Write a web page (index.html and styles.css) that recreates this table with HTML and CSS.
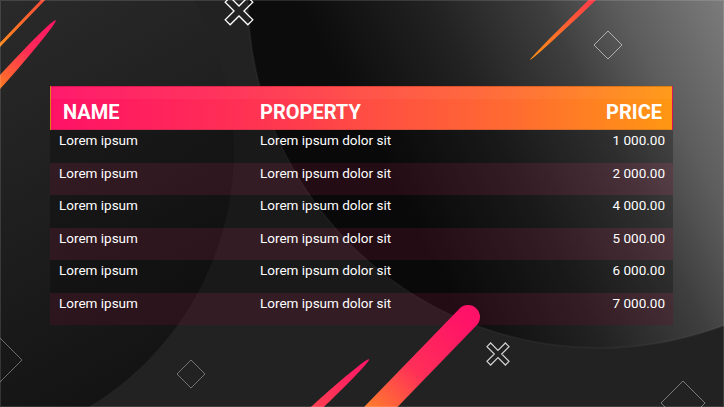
FILE: index.html
```html
<!DOCTYPE html>
<html lang="en">
<head>
<meta charset="utf-8">
<title>Price table</title>
<link rel="stylesheet" href="styles.css">
</head>
<body>
<div class="slide">
  <svg class="bg" viewBox="0 0 724 407" width="724" height="407" aria-hidden="true">
    <defs>
      <linearGradient id="gBig" gradientUnits="userSpaceOnUse" x1="300" y1="0" x2="636" y2="-168">
        <stop offset="0" stop-color="#0c0c0c"/>
        <stop offset="0.31" stop-color="#222222"/>
        <stop offset="0.57" stop-color="#3e3e3e"/>
        <stop offset="0.75" stop-color="#5c5c5c"/>
        <stop offset="1" stop-color="#7a7a7a"/>
      </linearGradient>
      <linearGradient id="gLeft" gradientUnits="userSpaceOnUse" x1="0" y1="0" x2="200" y2="350">
        <stop offset="0" stop-color="#2a2a2a"/>
        <stop offset="1" stop-color="#131313"/>
      </linearGradient>
    </defs>
    <rect width="724" height="407" fill="#222222"/>
    <circle cx="-66" cy="150" r="300" fill="url(#gLeft)"/>
    <circle cx="600" cy="-4" r="352" fill="url(#gBig)" stroke="rgba(255,255,255,0.04)" stroke-width="2"/>
  </svg>

  <div class="table">
    <div class="thead">
      <span class="th">NAME</span>
      <span class="th">PROPERTY</span>
      <span class="th num">PRICE</span>
    </div>
    <div class="row odd"><span>Lorem ipsum</span><span>Lorem ipsum dolor sit</span><span class="num">1 000.00</span></div>
    <div class="row even"><span>Lorem ipsum</span><span>Lorem ipsum dolor sit</span><span class="num">2 000.00</span></div>
    <div class="row odd"><span>Lorem ipsum</span><span>Lorem ipsum dolor sit</span><span class="num">4 000.00</span></div>
    <div class="row even"><span>Lorem ipsum</span><span>Lorem ipsum dolor sit</span><span class="num">5 000.00</span></div>
    <div class="row odd"><span>Lorem ipsum</span><span>Lorem ipsum dolor sit</span><span class="num">6 000.00</span></div>
    <div class="row even"><span>Lorem ipsum</span><span>Lorem ipsum dolor sit</span><span class="num">7 000.00</span></div>
  </div>

  <svg class="deco" viewBox="0 0 724 407" width="724" height="407" aria-hidden="true">
    <defs>
      <linearGradient id="gThin" gradientUnits="userSpaceOnUse" x1="0" y1="45" x2="43" y2="0">
        <stop offset="0" stop-color="#ff8a1c"/>
        <stop offset="1" stop-color="#ff4a3a"/>
      </linearGradient>
      <linearGradient id="gTL" x1="0" y1="0" x2="1" y2="0">
        <stop offset="0.55" stop-color="#ff7a22"/>
        <stop offset="0.8" stop-color="#ff2a58"/>
        <stop offset="1" stop-color="#ff1466"/>
      </linearGradient>
      <linearGradient id="gTR" x1="0" y1="0" x2="1" y2="0">
        <stop offset="0" stop-color="#ff9414"/>
        <stop offset="0.39" stop-color="#ff3a48"/>
      </linearGradient>
      <linearGradient id="gBigStick" gradientUnits="userSpaceOnUse" x1="466" y1="318" x2="375" y2="412">
        <stop offset="0" stop-color="#ff1268"/>
        <stop offset="0.55" stop-color="#ff2e58"/>
        <stop offset="1" stop-color="#ff7a2e"/>
      </linearGradient>
      <linearGradient id="gSmall" x1="0" y1="0" x2="1" y2="0">
        <stop offset="0.5" stop-color="#ff4a4a"/>
        <stop offset="1" stop-color="#ff1468"/>
      </linearGradient>
    </defs>

    <line x1="-2" y1="47" x2="45" y2="-2" stroke="url(#gThin)" stroke-width="3" stroke-linecap="round"/>
    <ellipse cx="-10" cy="93" rx="98" ry="4.8" fill="url(#gTL)" transform="rotate(-47.9 -10 93)"/>
    <ellipse cx="610" cy="-17" rx="111" ry="2.6" fill="url(#gTR)" transform="rotate(-43.9 610 -17)"/>
    <line x1="468" y1="317" x2="342" y2="447" stroke="url(#gBigStick)" stroke-width="24" stroke-linecap="round"/>
    <ellipse cx="300" cy="423" rx="94" ry="4.5" fill="url(#gSmall)" transform="rotate(-42.7 300 423)"/>

    <polygon points="-3.5,-16 3.5,-16 3.5,-3.5 16,-3.5 16,3.5 3.5,3.5 3.5,16 -3.5,16 -3.5,3.5 -16,3.5 -16,-3.5 -3.5,-3.5"
      transform="translate(239 11) rotate(45)" fill="none" stroke="#ffffff" stroke-width="1.3" stroke-linejoin="miter"/>
    <polygon points="-2.6,-13 2.6,-13 2.6,-2.6 13,-2.6 13,2.6 2.6,2.6 2.6,13 -2.6,13 -2.6,2.6 -13,2.6 -13,-2.6 -2.6,-2.6"
      transform="translate(498 354) rotate(45)" fill="none" stroke="#d0d0d0" stroke-width="1.2"/>

    <polygon points="608,31 622,45 608,59 594,45" fill="none" stroke="rgba(255,255,255,0.55)" stroke-width="1"/>
    <polygon points="0,338 22,360 0,382 -22,360" fill="none" stroke="#6a6a6a" stroke-width="1"/>
    <polygon points="191,360 205,374 191,388 177,374" fill="none" stroke="#737373" stroke-width="1"/>
    <polygon points="683,381 705,403 683,425 661,403" fill="none" stroke="#7a7a7a" stroke-width="1"/>
  </svg>
</div>
</body>
</html>
```
FILE: styles.css
```css
* { box-sizing: border-box; }

html, body {
  margin: 0;
  padding: 0;
  background: #222222;
}

.slide {
  position: relative;
  width: 724px;
  height: 407px;
  overflow: hidden;
  padding: 86px 0 0 50px;
  font-family: Roboto, "Liberation Sans", Arial, sans-serif;
  color: #ffffff;
}

.slide::after {
  content: "";
  position: absolute;
  inset: 0;
  border: 1px solid rgba(255, 255, 255, 0.13);
  pointer-events: none;
  z-index: 3;
}

.bg, .deco {
  position: absolute;
  left: 0;
  top: 0;
  display: block;
  pointer-events: none;
}

.bg { z-index: 0; }
.deco { z-index: 2; }

.table {
  position: relative;
  z-index: 1;
  width: 623px;
}

.thead {
  display: grid;
  grid-template-columns: 197px 1fr auto;
  height: 44px;
  padding: 13px 10px 0 12px;
  border: 1px solid rgba(0, 0, 0, 0.14);
  background:
    linear-gradient(to bottom, rgba(255, 255, 255, 0.04) 0, rgba(255, 255, 255, 0.04) 12px, transparent 12px),
    linear-gradient(90deg, #ff1266 0%, #ff2a58 25%, #ff3c4c 40%, #ff4c44 50%, #ff6c30 75%, #ff9712 100%);
}

.th {
  font-size: 20px;
  font-weight: 700;
  line-height: 24px;
}

.row {
  display: grid;
  grid-template-columns: 201px 1fr auto;
  height: 32.5px;
  padding: 2px 8px 0 9px;
  font-size: 13.5px;
  line-height: 16px;
}

.odd { background: rgba(0, 0, 0, 0.25); }
.even { background: rgba(105, 16, 44, 0.27); }

.num { text-align: right; }
```
